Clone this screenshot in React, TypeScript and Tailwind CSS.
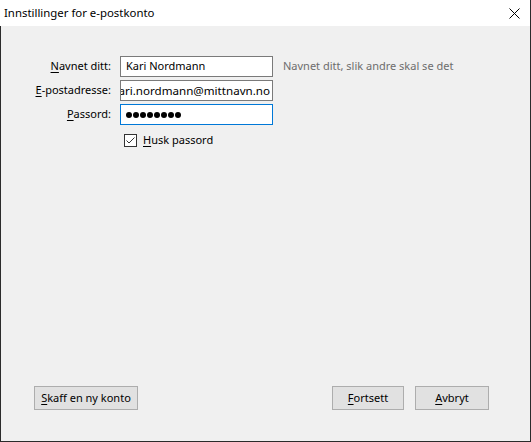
import { useState } from 'react';

const Key = ({ children }: { children: string }) => (
  <span className="underline underline-offset-2 decoration-1">{children}</span>
);

const Field = ({
  label,
  accel,
  children,
}: {
  label: string;
  accel: string;
  children: React.ReactNode;
}) => (
  <div className="flex items-center h-[21px]">
    <label className="w-[110px] text-right whitespace-nowrap">
      <Key>{accel}</Key>
      {label}
    </label>
    {children}
  </div>
);

const WinButton = ({ accel, rest, width }: { accel: string; rest: string; width: string }) => (
  <button className={`${width} h-[24px] bg-[#e1e1e1] border border-[#adadad] flex items-center justify-center`}>
    <span>
      <Key>{accel}</Key>
      {rest}
    </span>
  </button>
);

const App = () => {
  const [remember, setRemember] = useState(true);

  return (
    <div
      className="w-[531px] h-[442px] flex flex-col text-[11px] text-black select-none"
      style={{ fontFamily: '"Noto Sans", "Segoe UI", sans-serif' }}
    >
      <div className="h-[26px] bg-white border-r border-[#2b2b2b] flex items-center justify-between pl-[4px] pr-[10px]">
        <span className="text-[11.4px]">Innstillinger for e-postkonto</span>
        <svg width="11" height="11" viewBox="0 0 11 11" className="text-black">
          <path d="M0.5 0.5 L10.5 10.5 M10.5 0.5 L0.5 10.5" stroke="currentColor" strokeWidth="1" />
        </svg>
      </div>

      <div className="flex-1 bg-[#f0f0f0] border-l border-r border-b border-[#2b2b2b] flex flex-col">
        <div className="pt-[30px] flex flex-col gap-[3px]">
          <Field label="avnet ditt:" accel="N">
            <div className="ml-[9px] w-[153px] h-[21px] bg-white border border-[#7a7a7a] flex items-center px-[5px]">
              Kari Nordmann
            </div>
            <span className="ml-[10px] text-[#6d6d6d] whitespace-nowrap">Navnet ditt, slik andre skal se det</span>
          </Field>
          <Field label="-postadresse:" accel="E">
            <div className="ml-[9px] w-[153px] h-[21px] bg-white border border-[#7a7a7a] flex items-center justify-end overflow-hidden pr-[2px]">
              <span className="whitespace-nowrap text-[11.6px]">kari.nordmann@mittnavn.no</span>
            </div>
          </Field>
          <Field label="assord:" accel="P">
            <div className="ml-[9px] w-[153px] h-[21px] bg-white border border-[#0078d7] flex items-center gap-[1px] px-[5px]">
              {Array.from({ length: 8 }).map((_, i) => (
                <span key={i} className="w-[6px] h-[6px] rounded-full bg-black" />
              ))}
            </div>
          </Field>
        </div>

        <div className="mt-[7px] ml-[123px] flex items-center gap-[6px]" onClick={() => setRemember(!remember)}>
          <span className="w-[13px] h-[13px] border border-[#333] bg-white flex items-center justify-center">
            {remember && (
              <svg width="11" height="11" viewBox="0 0 11 11">
                <path d="M1.5 5.5 L4 8 L9.5 2.5" fill="none" stroke="#333" strokeWidth="1" />
              </svg>
            )}
          </span>
          <span>
            <Key>H</Key>usk passord
          </span>
        </div>

        <div className="mt-auto mb-[31px] ml-[33px] mr-[41px] flex items-center">
          <WinButton accel="S" rest="kaff en ny konto" width="w-[104px]" />
          <div className="ml-auto flex gap-[11px]">
            <WinButton accel="F" rest="ortsett" width="w-[72px]" />
            <WinButton accel="A" rest="vbryt" width="w-[74px]" />
          </div>
        </div>
      </div>
    </div>
  );
};

export default App;
